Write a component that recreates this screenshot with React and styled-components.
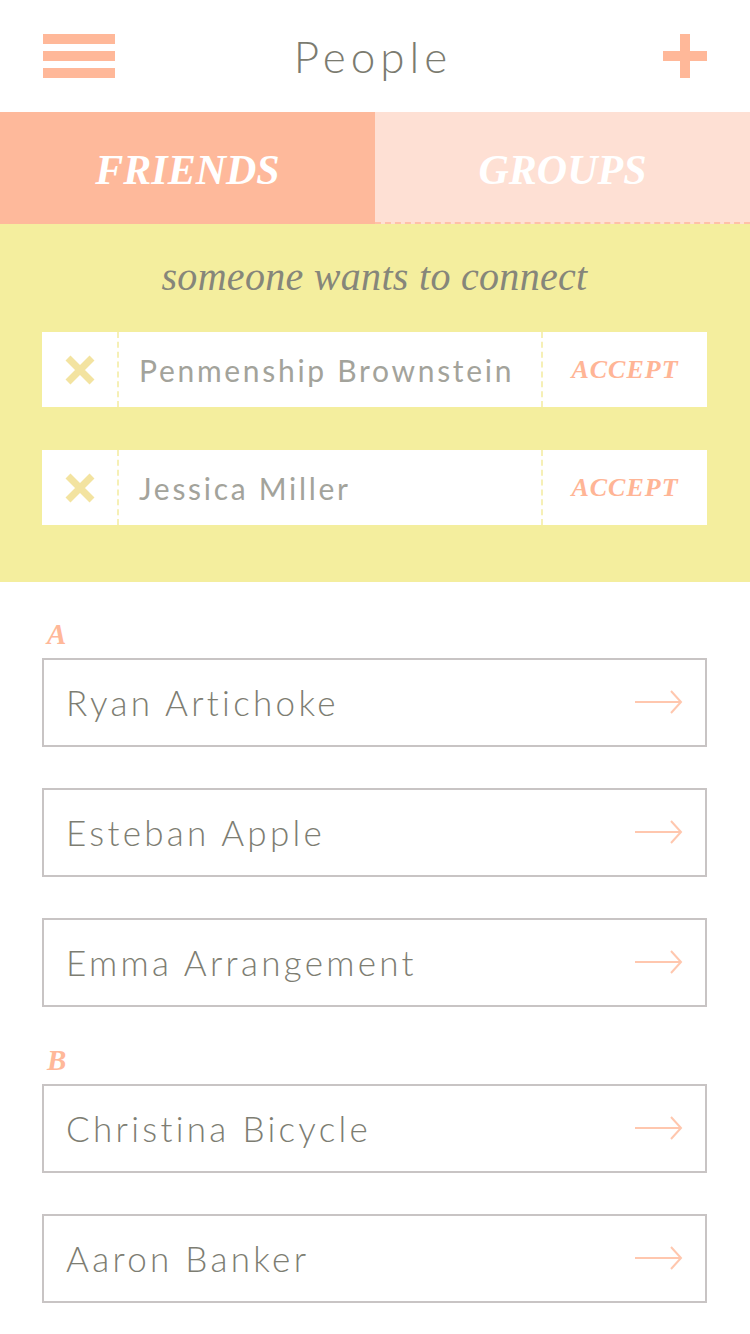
import React from 'react'
import styled, { createGlobalStyle } from 'styled-components'

const GlobalStyle = createGlobalStyle`
  body {
    margin: 0;
    background: #fff;
    font-family: Lato, "Open Sans", sans-serif;
  }
`

const Page = styled.div`
  width: 750px;
  min-height: 1334px;
  background: #fff;
`

const TopBar = styled.header`
  height: 112px;
  display: grid;
  grid-template-columns: 1fr auto 1fr;
  align-items: center;
  padding: 0 43px;
  box-sizing: border-box;
`

const MenuButton = styled.div`
  justify-self: start;
  width: 72px;
  height: 44px;
  display: flex;
  flex-direction: column;
  justify-content: space-between;
`

const MenuBar = styled.span`
  display: block;
  height: 10px;
  background: #ffb899;
`

const Title = styled.h1`
  margin: 0 0 0 -4px;
  font-family: Lato, sans-serif;
  font-weight: 300;
  font-size: 44px;
  letter-spacing: 5px;
  color: #7b7b70;
`

const PlusWrap = styled.div`
  justify-self: end;
  display: flex;
`

const Tabs = styled.nav`
  display: grid;
  grid-template-columns: 1fr 1fr;
  height: 112px;
`

const Tab = styled.div`
  display: flex;
  align-items: center;
  justify-content: center;
  padding-top: 6px;
  box-sizing: border-box;
  font-family: "Liberation Serif", serif;
  font-weight: bold;
  font-style: italic;
  font-size: 42px;
  color: #fff;
  background: ${p => (p.$active ? '#feb99b' : '#fee0d4')};
  border-bottom: 2px dashed ${p => (p.$active ? '#feb99b' : '#ffc1a8')};
`

const Requests = styled.section`
  background: #f4ee9e;
  padding: 23px 43px 57px 42px;
`

const RequestsTitle = styled.h2`
  margin: 0 0 25px;
  height: 60px;
  line-height: 60px;
  text-align: center;
  font-family: "Liberation Serif", serif;
  font-style: italic;
  font-weight: normal;
  font-size: 40px;
  letter-spacing: 0.3px;
  color: #86867a;
`

const RequestList = styled.div`
  display: flex;
  flex-direction: column;
  gap: 43px;
`

const RequestCard = styled.div`
  display: grid;
  grid-template-columns: 75px 1fr 166px;
  height: 75px;
  background: #fff;
`

const Cell = styled.div`
  display: flex;
  align-items: center;
  justify-content: ${p => p.$align || 'flex-start'};
  border-left: ${p => (p.$divider ? '2px dashed #f6f0b6' : 'none')};
  padding-left: ${p => p.$pad || 0}px;
`

const RequestName = styled.span`
  font-family: Lato, sans-serif;
  font-size: 30px;
  letter-spacing: 2.7px;
  color: #a3a39b;
`

const Accept = styled.span`
  font-family: "Liberation Serif", serif;
  font-weight: bold;
  font-style: italic;
  font-size: 26px;
  letter-spacing: 1px;
  color: #ffb596;
`

const People = styled.section`
  padding: 40px 43px 0 42px;
`

const Letter = styled.div`
  height: 24px;
  line-height: 24px;
  margin: 0 0 12px 5px;
  font-family: "Liberation Serif", serif;
  font-weight: bold;
  font-style: italic;
  font-size: 29px;
  color: #ffb899;
`

const PersonRow = styled.div`
  height: 89px;
  box-sizing: border-box;
  border: 2px solid #c8c4c4;
  margin-bottom: 41px;
  display: flex;
  align-items: center;
  justify-content: space-between;
  padding: 0 22px 2px;
`

const PersonName = styled.span`
  font-family: Lato, sans-serif;
  font-weight: 300;
  font-size: 35px;
  letter-spacing: 3.3px;
  color: #7d7d72;
`

const PlusIcon = () => (
  <svg width="44" height="44" viewBox="0 0 44 44">
    <rect x="17" y="0" width="10" height="44" fill="#ffb899" />
    <rect x="0" y="17" width="44" height="10" fill="#ffb899" />
  </svg>
)

const CrossIcon = () => (
  <svg width="30" height="30" viewBox="0 0 30 30">
    <path d="M3 3 L27 27 M27 3 L3 27" stroke="#f3e3a0" strokeWidth="7" />
  </svg>
)

const ArrowIcon = () => (
  <svg width="48" height="26" viewBox="0 0 48 26">
    <path d="M0 13 H46 M36 2 L46 13 L36 24" stroke="#ffc7ae" strokeWidth="2" fill="none" />
  </svg>
)

const requests = ['Penmenship Brownstein', 'Jessica Miller']

const groups = [
  { letter: 'A', names: ['Ryan Artichoke', 'Esteban Apple', 'Emma Arrangement'] },
  { letter: 'B', names: ['Christina Bicycle', 'Aaron Banker'] },
]

export default function App() {
  return (
    <Page>
      <GlobalStyle />
      <TopBar>
        <MenuButton>
          <MenuBar />
          <MenuBar />
          <MenuBar />
        </MenuButton>
        <Title>People</Title>
        <PlusWrap>
          <PlusIcon />
        </PlusWrap>
      </TopBar>
      <Tabs>
        <Tab $active>FRIENDS</Tab>
        <Tab>GROUPS</Tab>
      </Tabs>
      <Requests>
        <RequestsTitle>someone wants to connect</RequestsTitle>
        <RequestList>
          {requests.map(name => (
            <RequestCard key={name}>
              <Cell $align="center">
                <CrossIcon />
              </Cell>
              <Cell $divider $pad={20}>
                <RequestName>{name}</RequestName>
              </Cell>
              <Cell $divider $align="center">
                <Accept>ACCEPT</Accept>
              </Cell>
            </RequestCard>
          ))}
        </RequestList>
      </Requests>
      <People>
        {groups.map(group => (
          <div key={group.letter}>
            <Letter>{group.letter}</Letter>
            {group.names.map(name => (
              <PersonRow key={name}>
                <PersonName>{name}</PersonName>
                <ArrowIcon />
              </PersonRow>
            ))}
          </div>
        ))}
      </People>
    </Page>
  )
}
